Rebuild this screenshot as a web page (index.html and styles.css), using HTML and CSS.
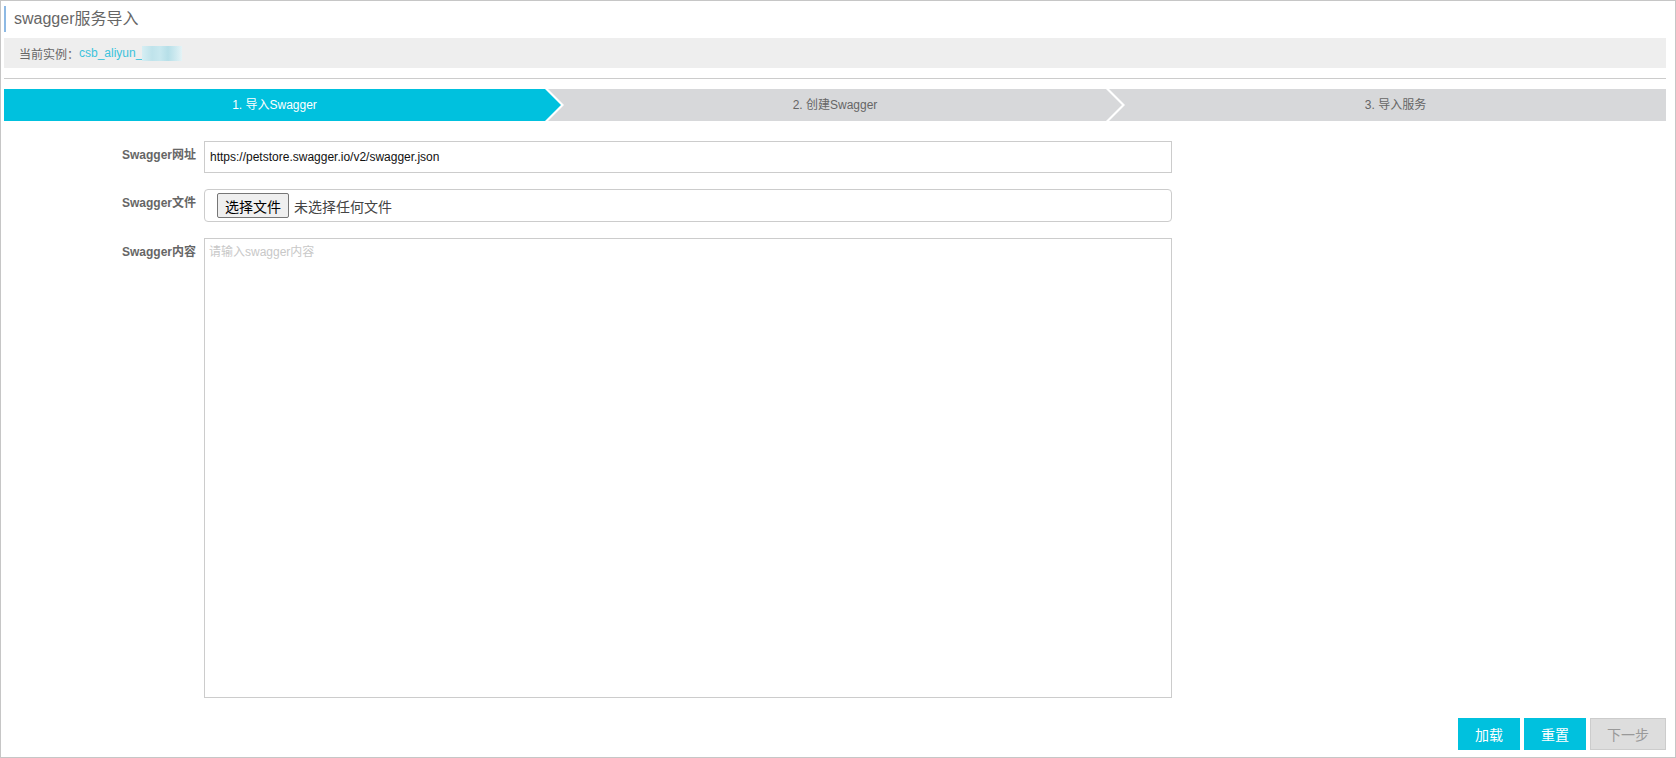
FILE: index.html
```html
<!DOCTYPE html>
<html lang="zh-CN">
<head>
<meta charset="utf-8">
<title>swagger服务导入</title>
<link rel="stylesheet" href="styles.css">
</head>
<body>
<div class="page">
  <div class="title">swagger服务导入</div>
  <div class="instance-bar">
    <span class="instance-label">当前实例：</span><span class="instance-name">csb_aliyun_</span><span class="masked"></span>
  </div>
  <div class="divider"></div>
  <div class="steps">
    <div class="step step-first active">1. 导入Swagger</div>
    <div class="step step-mid">2. 创建Swagger</div>
    <div class="step step-last">3. 导入服务</div>
  </div>
  <div class="form">
    <div class="label">Swagger网址</div>
    <input class="text-input" type="text" value="https://petstore.swagger.io/v2/swagger.json">
    <div class="label">Swagger文件</div>
    <div class="file-box">
      <button class="file-btn" type="button">选择文件</button>
      <span class="file-name">未选择任何文件</span>
    </div>
    <div class="label">Swagger内容</div>
    <textarea class="content-area" placeholder="请输入swagger内容"></textarea>
  </div>
  <div class="actions">
    <button class="btn btn-primary" type="button">加载</button>
    <button class="btn btn-primary" type="button">重置</button>
    <button class="btn btn-disabled" type="button">下一步</button>
  </div>
</div>
</body>
</html>
```
FILE: styles.css
```css
* { box-sizing: border-box; }
html, body { margin: 0; padding: 0; background: #fff; }
body {
  font-family: "Liberation Sans", Arial, "Noto Sans CJK SC", sans-serif;
  font-size: 12px;
  color: #333;
}
.page {
  width: 1676px;
  height: 758px;
  border: 1px solid #c6c6c6;
  padding: 0 9px 0 3px;
  display: flex;
  flex-direction: column;
  overflow: hidden;
}
.title {
  margin-top: 5px;
  height: 26px;
  line-height: 26px;
  border-left: 2px solid #8db9e4;
  padding-left: 8px;
  font-size: 16px;
  color: #666;
}
.instance-bar {
  margin-top: 6px;
  height: 30px;
  background: #eeeeee;
  padding-left: 15px;
  display: flex;
  align-items: center;
  font-size: 12px;
}
.instance-label { color: #666; }
.instance-name { color: #3cc3dc; }
.masked {
  display: inline-block;
  width: 40px;
  height: 15px;
  background: linear-gradient(90deg, #d6eef3 0%, #bfe3eb 25%, #c8e8ef 45%, #b6dfe8 65%, #cfeaf0 85%, #e4f3f6 100%);
}
.divider {
  margin-top: 10px;
  height: 1px;
  background: #cccccc;
}
.steps {
  margin-top: 10px;
  display: flex;
  height: 32px;
  background: #fff;
}
.step {
  height: 32px;
  line-height: 32px;
  text-align: center;
  background: #d7d8da;
  color: #666;
  font-size: 12px;
}
.step.active { background: #00c1de; color: #fff; }
.step-first {
  flex: 0 0 557px;
  padding-right: 16px;
  clip-path: polygon(0 0, calc(100% - 16px) 0, 100% 50%, calc(100% - 16px) 100%, 0 100%);
}
.step-mid {
  flex: 0 0 574px;
  margin-left: -13px;
  clip-path: polygon(0 0, calc(100% - 16px) 0, 100% 50%, calc(100% - 16px) 100%, 0 100%, 16px 50%);
}
.step-last {
  flex: 1 1 auto;
  margin-left: -13px;
  padding-left: 16px;
  clip-path: polygon(0 0, 100% 0, 100% 100%, 0 100%, 16px 50%);
}
.form {
  margin-top: 20px;
  display: grid;
  grid-template-columns: 200px 968px;
  row-gap: 16px;
}
.label {
  text-align: right;
  padding-right: 8px;
  padding-top: 5px;
  line-height: 18px;
  font-weight: bold;
  font-size: 12px;
  color: #666;
}
.text-input {
  height: 32px;
  border: 1px solid #cccccc;
  padding: 0 5px;
  font-family: "Liberation Sans", Arial, sans-serif;
  font-size: 12px;
  color: #111;
  outline: none;
  margin: 0;
}
.file-box {
  height: 33px;
  border: 1px solid #cccccc;
  border-radius: 4px;
  padding: 0 12px;
  display: flex;
  align-items: center;
}
.file-btn {
  height: 25px;
  width: 72px;
  margin: 0;
  padding: 0;
  background: #efefef;
  border: 1px solid #767676;
  border-radius: 2px;
  font-family: "Noto Sans CJK SC", sans-serif;
  font-size: 14px;
  color: #000;
}
.file-name {
  margin-left: 5px;
  font-family: "Noto Sans CJK SC", sans-serif;
  font-size: 14px;
  color: #444;
}
.content-area {
  height: 460px;
  border: 1px solid #cccccc;
  padding: 4px 4px;
  resize: none;
  font-family: "Liberation Sans", Arial, "Noto Sans CJK SC", sans-serif;
  font-size: 12px;
  line-height: 18px;
  outline: none;
  margin: 0;
}
.content-area::placeholder { color: #c8c8c8; }
.actions {
  margin-top: 20px;
  display: flex;
  justify-content: flex-end;
  gap: 4px;
}
.btn {
  height: 32px;
  margin: 0;
  padding: 0;
  border: 1px solid transparent;
  font-family: "Noto Sans CJK SC", sans-serif;
  font-size: 14px;
}
.btn-primary {
  width: 62px;
  background: #00c1de;
  border-color: #00c1de;
  color: #fff;
}
.btn-disabled {
  width: 76px;
  background: #dddddd;
  border-color: #cccccc;
  color: #999;
}
```
